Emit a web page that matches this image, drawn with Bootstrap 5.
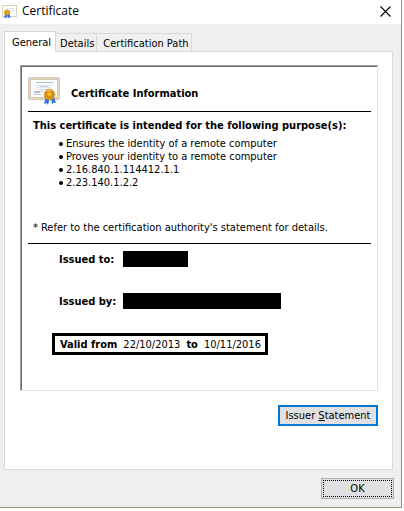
<!DOCTYPE html>
<html lang="en">
<head>
<meta charset="utf-8">
<meta name="viewport" content="width=device-width, initial-scale=1">
<title>Certificate</title>
<link rel="stylesheet" href="https://cdn.jsdelivr.net/npm/bootstrap@5.3.0/dist/css/bootstrap.min.css">
<style>
body{font-family:"DejaVu Sans Condensed","DejaVu Sans",sans-serif;font-size:11px;line-height:13px;color:#000;background:#fff}
.page{padding:0 2px 3px 0}
.dialog{background:#efefef;border:solid #87a05c;border-width:0 1px 1px 0}
.titlebar{height:24px;padding:0 10px 0 2px}
.titlebar h1{font:12px/16px "Open Sans","Noto Sans",sans-serif;margin:0 0 2px 4px}
.close-btn{line-height:0;margin-bottom:2px}
.tabs{padding:7px 0 0 4px}
.tabs .nav-link{font-size:11px;line-height:13px;color:#000;border:1px solid #d9d9d9;border-width:1px 1px 0 0;border-radius:0;padding:3px 2px 2px 4px;height:18px;background:#f0f0f0;white-space:nowrap}
.tabs .nav-link.active{background:#fff;border-width:1px 1px 0;height:21px;padding:3px 4px 3px 7px;position:relative;z-index:1;margin-bottom:-1px}
.tabs .nav-link.wide{padding-left:6px}
.pane{background:#fff;border:1px solid #d9d9d9;margin:0 8px 0 4px;padding:13px 14px 43px 15px}
.sheet{border:1px solid #e3e3e3;border-top-color:#a0a0a0;border-left-color:#a0a0a0;box-shadow:inset 1px 1px 0 #696969;padding:11px 6px 35px 7px}
.sheet hr{border-top:1px solid #000;opacity:1;margin:0}
.sheet h2{font-size:11px;line-height:13px;margin:0;padding:5px 0 0 11px;font-weight:700}
.certhead{padding-bottom:6px}
.intro{padding:7px 0 0 5px}
.purposes{padding:5px 0 0 31px;margin:0;list-style:none}
.purposes li{display:flex;align-items:center;gap:3px}
.purposes li::before{content:"";width:4px;height:4px;border-radius:50%;background:#000}
.note{padding:32px 0 9px 5px;gap:3px}
.details{padding:7px 0 0 24px}
.fields{padding-left:7px}
.field-gap{margin-bottom:26px}
.caption-col{width:64px;flex:none;font-weight:700}
.redact{background:#000;height:16px}
.redact-to{width:65px}
.redact-by{width:158px}
.valid{border:3px solid #000;padding:2px 4px 1px 5px;width:fit-content;height:22px;gap:6px}
.key{font-size:11px;line-height:13px;color:#000;background:#e1e1e1;border:1px solid #adadad;border-radius:0;padding:0;height:21px}
.key:hover{background:#e5f1fb;color:#000}
.issuer{width:100px;border:2px solid #0078d7;margin-top:14px}
.ok{width:73px;outline:1px dotted #000;outline-offset:-3px}
.actions{padding:8px 7px 8px 0}
</style>
<script src="https://cdn.jsdelivr.net/npm/bootstrap@5.3.0/dist/js/bootstrap.bundle.min.js"></script>
</head>
<body>
<svg class="d-none" aria-hidden="true">
<symbol id="certificate" viewBox="0 0 32 28">
<rect x=".5" y=".5" width="31" height="22" rx="1" fill="#d9cbb8" stroke="#cfc2b0"/>
<rect x="1" y="1" width="30" height="21" fill="none" stroke="#f1e8d9" stroke-dasharray="1 1"/>
<rect x="3" y="3" width="26" height="17" fill="#fbfcfe"/>
<path d="M8 5.500h17" stroke="#a5aab5" stroke-width=".8"/><path d="M6 8.500h20M8 10.500h15" stroke="#d8deea" stroke-width=".7"/><path d="M12 9.500h8M12 12.500h7" stroke="#a6b0e0" stroke-width=".6"/><path d="M6 14.500h9M6 17.500h7" stroke="#b4bac9" stroke-width=".8"/><path d="M6 16c2-2 3 1 6-1" fill="none" stroke="#7c8aa8" stroke-width=".7"/>
<path d="M17.500 21l-1.500 6 2.500-1 1.500 2 1.500-6zM23 21.500l1 6 1.500-2 2.500.5-2-6z" fill="#2f75e8"/>
<circle cx="21.500" cy="17.500" r="5.300" fill="#d99a12" stroke="#c27f10" stroke-width=".8" stroke-dasharray="1.500 .7"/>
<circle cx="21.500" cy="17.300" r="2.800" fill="#f3bd2e" stroke="#a96c08" stroke-width=".8"/><path d="M19 14.500q2-1.500 4-.5" stroke="#ffe078" fill="none"/>
</symbol>
<symbol id="certificate-small" viewBox="0 0 16 14">
<rect x=".5" y=".5" width="14" height="11" fill="#fff" stroke="#dccdb5"/><path d="M3 3.500h9M3 5.500h9" stroke="#e2e5ef"/>
<path d="M3 9l-1 4 2-.5 1 .5 1-3zM6 9v4l1-.5 1.500.5L7.500 8z" fill="#2f75e8"/>
<circle cx="5" cy="7.500" r="2.600" fill="#e3a31b" stroke="#bd8110" stroke-width=".7"/>
</symbol>
</svg>
<div class="page">
<main class="dialog">
<header class="titlebar d-flex align-items-center bg-white">
<svg width="16" height="14" aria-hidden="true"><use href="#certificate-small"/></svg>
<h1>Certificate</h1>
<button type="button" class="close-btn btn p-0 border-0 ms-auto" aria-label="Close"><svg width="11" height="11" viewBox="0 0 11 11" fill="none" stroke="#000" stroke-width="1.100"><path d="M.5.5l10 10M10.500.5l-10 10"/></svg></button>
</header>
<ul class="nav tabs flex-nowrap align-items-end" role="tablist">
<li role="presentation"><button type="button" class="nav-link active" role="tab" aria-selected="true" aria-controls="general">General</button></li>
<li role="presentation"><button type="button" class="nav-link" role="tab" aria-selected="false">Details</button></li>
<li role="presentation"><button type="button" class="nav-link wide" role="tab" aria-selected="false">Certification Path</button></li>
</ul>
<section class="pane" id="general" role="tabpanel">
<div class="sheet">
<div class="d-flex align-items-center certhead">
<svg width="32" height="28" aria-hidden="true"><use href="#certificate"/></svg>
<h2>Certificate Information</h2>
</div>
<hr>
<p class="intro fw-bold mb-0">This certificate is intended for the following purpose(s):</p>
<ul class="purposes">
<li>Ensures the identity of a remote computer</li>
<li>Proves your identity to a remote computer</li>
<li>2.16.840.1.114412.1.1</li>
<li>2.23.140.1.2.2</li>
</ul>
<p class="note d-flex mb-0"><span>*</span><span>Refer to the certification authority's statement for details.</span></p>
<hr>
<div class="details">
<div class="fields field-gap d-flex align-items-center"><span class="caption-col">Issued to:</span><span class="redact redact-to"></span></div>
<div class="fields mb-4 d-flex align-items-center"><span class="caption-col">Issued by:</span><span class="redact redact-by"></span></div>
<div class="valid d-flex align-items-center"><b>Valid from</b><span>22/10/2013</span><b>to</b><span>10/11/2016</span></div>
</div>
</div>
<div class="text-end"><button type="button" class="btn key issuer">Issuer <u>S</u>tatement</button></div>
</section>
<footer class="actions text-end"><button type="button" class="btn key ok">OK</button></footer>
</main>
</div>
</body>
</html>
